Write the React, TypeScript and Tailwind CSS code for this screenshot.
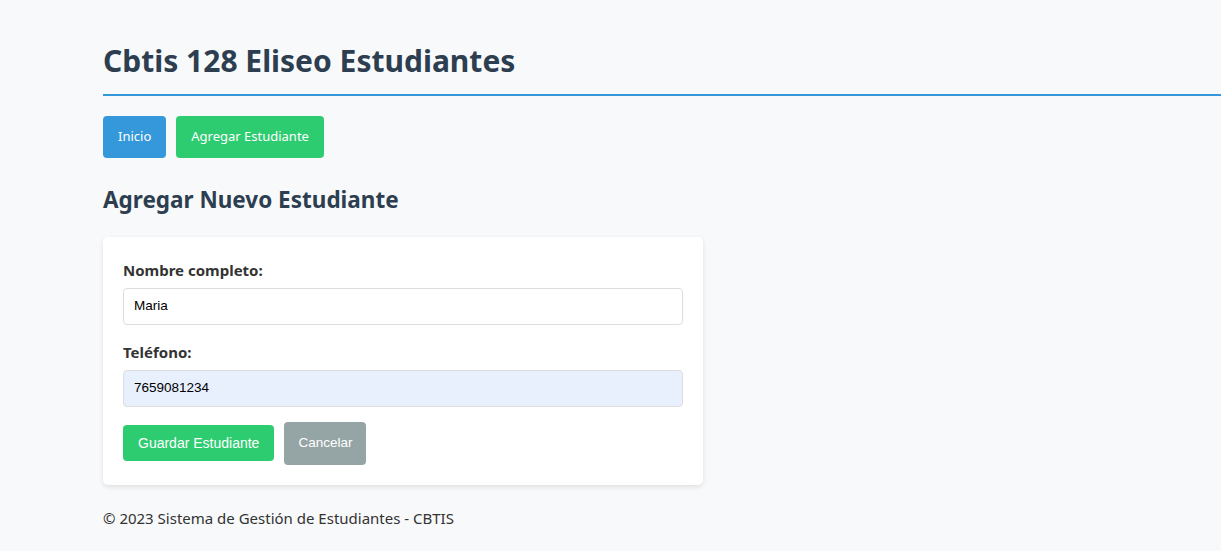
import React from "react";

export default function App() {
  return (
    <div
      className="min-h-[551px] w-full bg-[#f8f9fa] text-[#333]"
      style={{ fontFamily: '"Noto Sans", "Open Sans", sans-serif' }}
    >
      <div className="pl-[103px] pt-[41px]">
        <header className="border-b-2 border-[#3498db] pb-[14px]">
          <h1 className="text-[30px] leading-[39px] font-bold text-[#2c3e50]">
            Cbtis 128 Eliseo Estudiantes
          </h1>
        </header>

        <nav className="mt-[20px] flex gap-[10px]">
          <a className="flex h-[42px] items-center rounded-[4px] bg-[#3498db] px-[15px] text-[13px] text-white">
            Inicio
          </a>
          <a className="flex h-[42px] items-center rounded-[4px] bg-[#2ecc71] px-[15px] text-[13px] text-white">
            Agregar Estudiante
          </a>
        </nav>

        <h2 className="mt-[27px] text-[22.5px] leading-[30px] font-bold text-[#2c3e50]">
          Agregar Nuevo Estudiante
        </h2>

        <div className="mt-[22px] w-[600px] rounded-[5px] bg-white p-[20px] shadow-[0_2px_5px_rgba(0,0,0,0.1)]">
          <div className="pt-[3px]">
            <label className="block text-[15px] leading-[20px] font-bold text-[#333]">
              Nombre completo:
            </label>
            <div
              className="mt-[8px] flex h-[37px] items-center rounded-[4px] border border-[#ddd] bg-white px-[10px] text-[13.5px] text-black"
              style={{ fontFamily: '"Liberation Sans", Arial, sans-serif' }}
            >
              Maria
            </div>
          </div>
          <div className="mt-[17px]">
            <label className="block text-[15px] leading-[20px] font-bold text-[#333]">
              Teléfono:
            </label>
            <div
              className="mt-[8px] flex h-[37px] items-center rounded-[4px] border border-[#ddd] bg-[#e8f0fe] px-[10px] text-[13.5px] text-black"
              style={{ fontFamily: '"Liberation Sans", Arial, sans-serif' }}
            >
              7659081234
            </div>
          </div>
          <div
            className="mt-[15px] flex items-start gap-[10px]"
            style={{ fontFamily: '"Liberation Sans", Arial, sans-serif' }}
          >
            <button className="mt-[3px] flex h-[36px] items-center rounded-[4px] bg-[#2ecc71] px-[15px] text-[14px] text-white">
              Guardar Estudiante
            </button>
            <a className="flex h-[43px] items-center rounded-[4px] bg-[#95a5a6] px-[14px] text-[13.5px] text-white">
              Cancelar
            </a>
          </div>
        </div>

        <footer className="mt-[22px] text-[15px] leading-[22px] text-[#333]">
          © 2023 Sistema de Gestión de Estudiantes - CBTIS
        </footer>
      </div>
    </div>
  );
}
